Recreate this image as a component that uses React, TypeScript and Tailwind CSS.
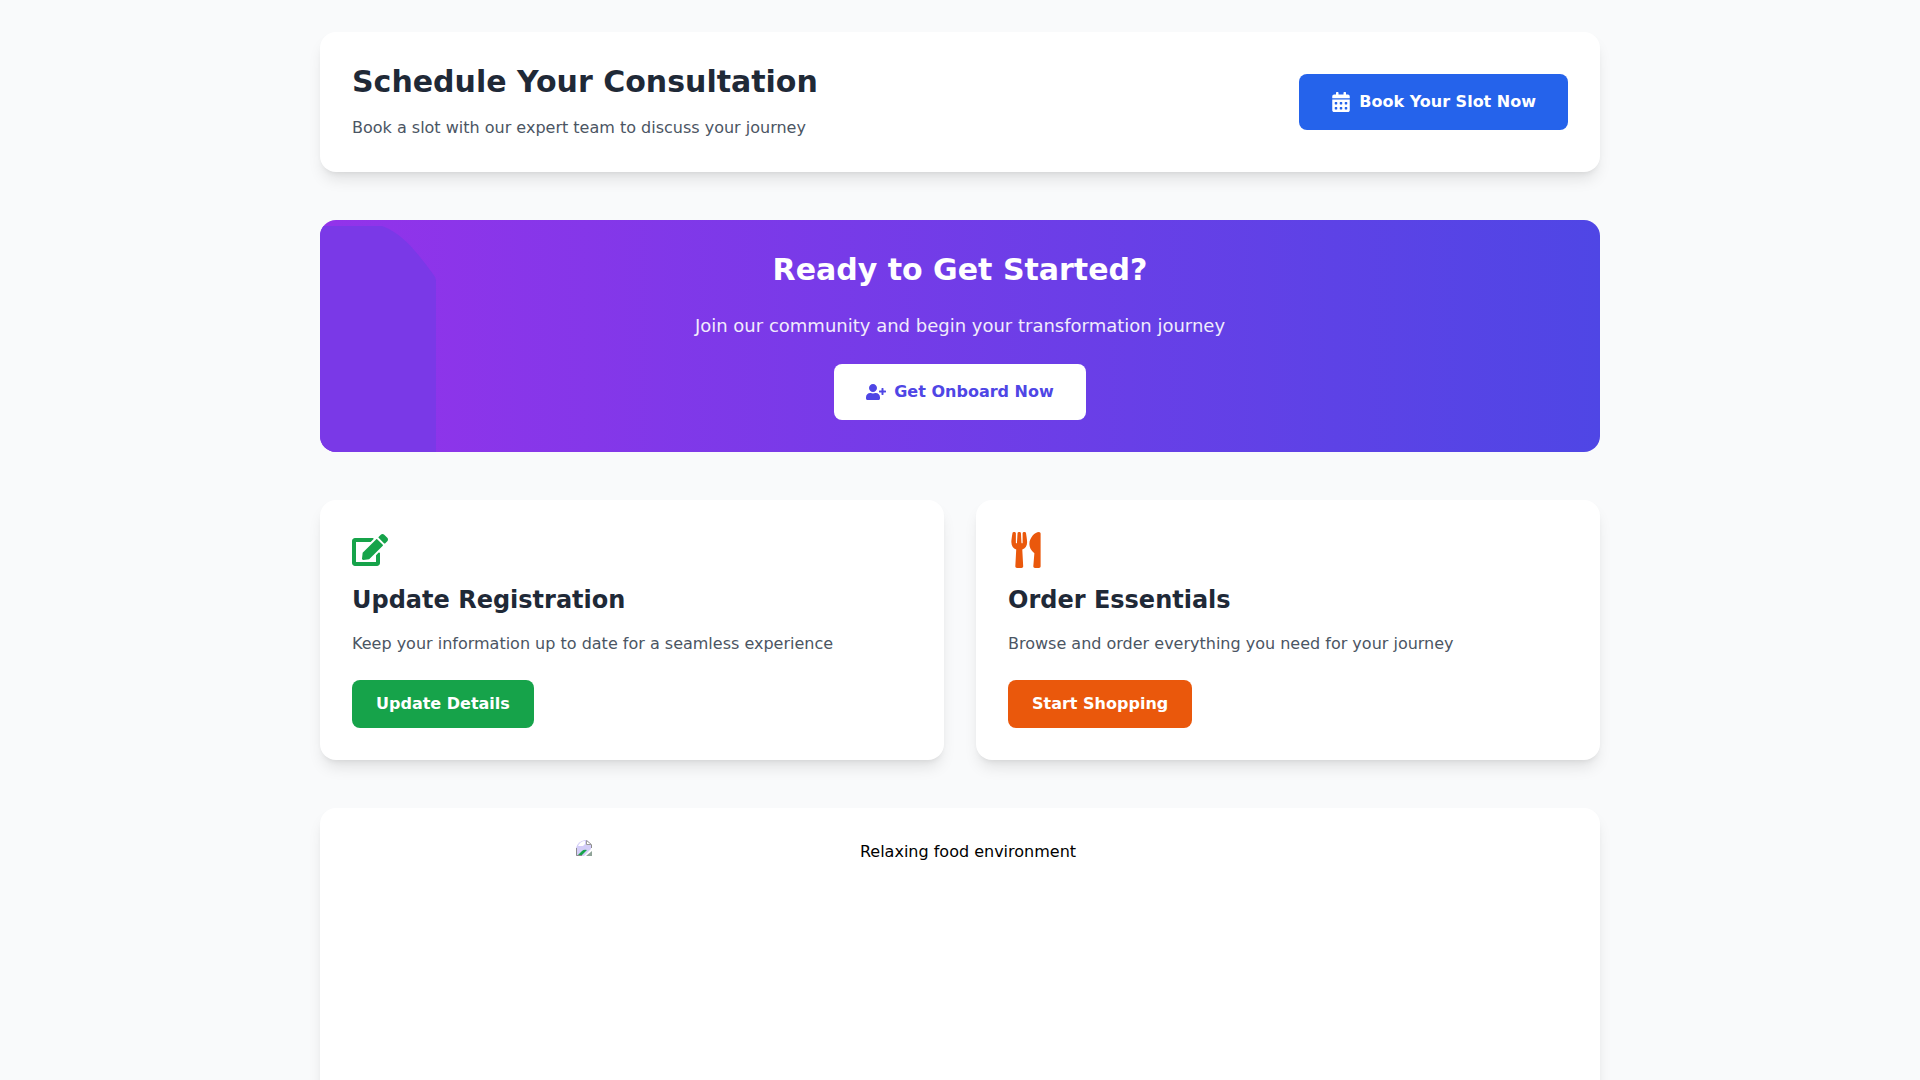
import React from 'react';
import { FaCalendarAlt, FaUserPlus, FaEdit, FaUtensils } from 'react-icons/fa';

const actions = [{
  title: 'Update Registration',
  description: 'Keep your information up to date for a seamless experience',
  label: 'Update Details',
  icon: FaEdit,
  iconColor: 'text-[#16a34a]',
  buttonColor: 'bg-[#16a34a] hover:bg-[#15803d]'
}, {
  title: 'Order Essentials',
  description: 'Browse and order everything you need for your journey',
  label: 'Start Shopping',
  icon: FaUtensils,
  iconColor: 'text-[#ea580c]',
  buttonColor: 'bg-[#ea580c] hover:bg-[#c2410c]'
}];

// Placeholder glyph shown while the photo is missing
const MissingImage = () => <svg width="16" height="16" viewBox="0 0 16 16" className="shrink-0">
    <path d="M0 16V8Q2 1 9 0h2l4 4v5l-7 7z" fill="#d3cdf8" />
    <path d="M2 6c1-3 4-5 7-5v3L7 6z" fill="#fff" />
    <path d="M10.500 0.500v4h5z" fill="#fff" stroke="#9a9a9a" />
    <path d="M2 15l4-4q2-2 5-1l-5 5z" fill="#16a34a" />
    <path d="M0.500 8v7.500H6M15.500 5v3" fill="none" stroke="#8c8c8c" />
    <path d="M10 16l6-5v5z" fill="#8fa398" />
  </svg>;

const App = () => {
  return <div className="min-h-screen bg-[#f9fafb] py-8 font-['DejaVu_Sans',sans-serif]">
      <main className="max-w-7xl mx-auto space-y-12">
        <section className="bg-white rounded-2xl shadow-lg p-8 flex flex-col md:flex-row items-center justify-between">
          <div>
            <h2 className="text-3xl font-bold text-[#1f2937] mb-4">Schedule Your Consultation</h2>
            <p className="text-[#4b5563]">Book a slot with our expert team to discuss your journey</p>
          </div>
          <button className="bg-[#2563eb] hover:bg-[#1d4ed8] text-white px-8 py-4 rounded-lg font-semibold flex items-center gap-2">
            <FaCalendarAlt className="text-xl" />
            Book Your Slot Now
          </button>
        </section>

        <section className="relative overflow-hidden rounded-2xl bg-linear-to-r/srgb from-[#9333ea] to-[#4f46e5] p-8 text-center text-white">
          <svg className="absolute inset-y-0 left-0 h-full" viewBox="0 0 116 232" aria-hidden="true">
            <path d="M0 6H62C84 14 98 34 113 54Q116 57 116 62V232H0z" fill="#7a39e7" />
          </svg>
          <div className="relative">
            <h2 className="text-3xl font-bold mb-6">Ready to Get Started?</h2>
            <p className="text-lg mb-6 opacity-90">Join our community and begin your transformation journey</p>
            <button className="bg-white hover:bg-gray-100 text-[#4f46e5] px-8 py-4 rounded-lg font-semibold inline-flex items-center gap-2">
              <FaUserPlus className="text-xl" />
              Get Onboard Now
            </button>
          </div>
        </section>

        <section className="grid md:grid-cols-2 gap-8">
          {actions.map(({ title, description, label, icon: Icon, iconColor, buttonColor }) => <div key={title} className="bg-white rounded-2xl shadow-lg p-8">
              <Icon className={`text-4xl mb-4 ${iconColor}`} />
              <h3 className="text-2xl font-bold text-[#1f2937] mb-4">{title}</h3>
              <p className="text-[#4b5563] mb-6">{description}</p>
              <button className={`text-white px-6 py-3 rounded-lg font-semibold ${buttonColor}`}>{label}</button>
            </div>)}
        </section>

        <section className="bg-white rounded-2xl shadow-lg p-8">
          <div className="max-w-3xl h-96 mx-auto flex items-start" role="img" aria-label="Relaxing food environment">
            <MissingImage />
            <span className="flex-1 text-center text-black">Relaxing food environment</span>
          </div>
        </section>
      </main>
    </div>;
};
export default App;
